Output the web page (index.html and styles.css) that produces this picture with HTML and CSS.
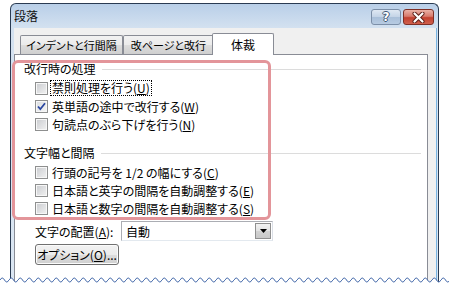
FILE: index.html
```html
<!DOCTYPE html>
<html lang="ja">
<head>
  <meta charset="utf-8">
  <title>段落</title>
  <link rel="stylesheet" href="styles.css">
</head>
<body>
  <div class="page">
    <div class="window">
      <div class="titlebar">
        <span class="title">段落</span>
        <div class="caption-buttons">
          <span class="cap-btn help">?</span>
          <span class="cap-btn close">
            <svg width="13" height="11" viewBox="0 0 13 11">
              <path d="M2.5 1.5 L10.5 9.5 M10.5 1.5 L2.5 9.5" stroke="#5a1d16" stroke-width="4" stroke-linecap="round"/>
              <path d="M2.5 1.5 L10.5 9.5 M10.5 1.5 L2.5 9.5" stroke="#fff" stroke-width="2.2" stroke-linecap="round"/>
            </svg>
          </span>
        </div>
      </div>

      <div class="client">
        <div class="tabs">
          <div class="tab tab-indent">インデントと行間隔</div>
          <div class="tab tab-break">改ページと改行</div>
          <div class="tab tab-layout active">体裁</div>
        </div>

        <div class="panel">
          <div class="group-title">改行時の処理</div>
          <div class="check"><span class="box"></span><span class="focus">禁則処理を行う(<u>U</u>)</span></div>
          <div class="check"><span class="box checked">
            <svg width="11" height="11" viewBox="0 0 11 11"><path d="M2 5.5 L4.3 8.2 L9 2.2" stroke="#2a46a0" stroke-width="1.8" fill="none"/></svg>
          </span><span>英単語の途中で改行する(<u>W</u>)</span></div>
          <div class="check"><span class="box"></span><span>句読点のぶら下げを行う(<u>N</u>)</span></div>

          <div class="group-title second">文字幅と間隔</div>
          <div class="check"><span class="box"></span><span>行頭の記号を 1/2 の幅にする(<u>C</u>)</span></div>
          <div class="check"><span class="box"></span><span>日本語と英字の間隔を自動調整する(<u>E</u>)</span></div>
          <div class="check"><span class="box"></span><span>日本語と数字の間隔を自動調整する(<u>S</u>)</span></div>

          <div class="field-row">
            <span class="field-label">文字の配置(<u>A</u>):</span>
            <div class="combo">
              <span>自動</span>
              <span class="combo-btn">
                <svg width="7" height="4" viewBox="0 0 7 4"><path d="M0 0 H7 L3.5 4 Z" fill="#000"/></svg>
              </span>
            </div>
          </div>

          <button class="btn">オプション(<u>O</u>)...</button>
        </div>
      </div>
    </div>

    <!-- red annotation frame drawn over the dialog -->
    <div class="annotation"></div>

    <!-- torn bottom edge -->
    <svg class="tear" width="449" height="18">
      <defs>
        <pattern id="wave" width="9" height="18" patternUnits="userSpaceOnUse">
          <path d="M0 8 Q2.25 4 4.5 8 T9 8 V18 H0 Z" fill="#fff"/>
          <path d="M0 8 Q2.25 4 4.5 8 T9 8" stroke="#3d63a6" stroke-width="1" fill="none"/>
        </pattern>
      </defs>
      <rect x="0" y="0" width="449" height="18" fill="url(#wave)"/>
    </svg>
  </div>
</body>
</html>
```

FILE: styles.css
```css
html, body {
  margin: 0;
  background: #fff;
}

body {
  font-family: "Noto Sans CJK JP", "Liberation Sans", sans-serif;
  font-size: 12px;
  color: #000;
  font-feature-settings: "palt";
}

.page {
  position: relative;
  width: 449px;
  height: 290px;
  overflow: hidden;
}

.window {
  margin: 3px 0 0 10px;
  width: 427px;
  height: 300px;
  border: 1px solid #2a3b52;
  border-bottom: none;
  border-radius: 6px 6px 0 0;
  background: linear-gradient(#b9cfe8 0, #d3e1f0 24px, #dbe6f2 100%);
}

.titlebar {
  display: flex;
  align-items: flex-start;
  height: 24px;
  padding-left: 3px;
}

.title {
  line-height: 24px;
  color: #111;
}

.caption-buttons {
  display: flex;
  gap: 2px;
  margin: 5px 4px 0 auto;
}

.cap-btn {
  box-sizing: border-box;
  display: flex;
  align-items: center;
  justify-content: center;
  height: 16px;
  border-radius: 3px;
}

.help {
  width: 30px;
  border: 1px solid #7c8fa8;
  background: linear-gradient(#dfe8f3 0%, #c3d3e6 50%, #a9bfd9 51%, #b7cbe2 100%);
  color: #fff;
  font-family: "DejaVu Sans", sans-serif;
  font-weight: bold;
  font-size: 12px;
  text-shadow: 1px 0 #3f5674, -1px 0 #3f5674, 0 1px #3f5674, 0 -1px #3f5674;
}

.close {
  width: 31px;
  border: 1px solid #7e2f25;
  background: linear-gradient(#eab1a6 0%, #d77a6c 45%, #c2402f 55%, #d0604d 100%);
}

.client {
  margin: 0 1px 0 3px;
  border-right: 1px solid #78b4e2;
  background: #f0f0f0;
  padding-top: 5px;
  height: 300px;
}

.tabs {
  display: flex;
  align-items: flex-end;
  padding-left: 6px;
}

.tab {
  box-sizing: border-box;
  height: 19px;
  line-height: 18px;
  text-align: center;
  font-size: 11px;
  border: 1px solid #898c95;
  border-bottom: none;
  border-radius: 2px 2px 0 0;
  background: linear-gradient(#f2f2f2 0%, #ebebeb 50%, #dddddd 51%, #cfcfcf 100%);
  white-space: nowrap;
}

.tab-indent { width: 103px; }
.tab-break { width: 91px; }

.tab.active {
  position: relative;
  z-index: 1;
  width: 62px;
  height: 22px;
  line-height: 22px;
  font-size: 12px;
  margin-left: -2px;
  margin-bottom: -1px;
  background: #fff;
}

.panel {
  margin-right: 8px;
  height: 300px;
  border: 1px solid #898c95;
  background: #fff;
  padding: 5px 0 0 9px;
}

.group-title {
  display: flex;
  align-items: center;
  height: 17px;
  line-height: 17px;
  margin-bottom: 2px;
}

.group-title::after {
  content: "";
  flex: 1;
  border-top: 1px solid #dcdcdc;
  margin: 1px 6px 0 6px;
}

.group-title.second {
  margin-top: 11px;
}

.check {
  display: flex;
  align-items: center;
  height: 18px;
  padding-left: 11px;
  white-space: nowrap;
}

.box {
  box-sizing: border-box;
  display: flex;
  align-items: center;
  justify-content: center;
  width: 13px;
  height: 13px;
  margin-right: 4px;
  border: 1px solid #8e8f8f;
  background: linear-gradient(135deg, #c9cbcf, #f2f2f2);
  box-shadow: inset 0 0 0 1px #f7f7f7;
}

.box.checked {
  background: linear-gradient(135deg, #d9dce0, #f6f6f6);
}

.focus {
  outline: 1px dotted #000;
  padding: 0 1px;
  margin-left: -1px;
  line-height: 14px;
}

u {
  text-underline-offset: 1px;
}

.field-row {
  display: flex;
  align-items: center;
  height: 20px;
  margin-top: 4px;
  padding-left: 11px;
}

.field-label {
  width: 86px;
  white-space: nowrap;
}

.combo {
  box-sizing: border-box;
  display: flex;
  align-items: center;
  justify-content: space-between;
  width: 152px;
  height: 20px;
  padding: 1px 1px 1px 4px;
  border: 1px solid #abadb3;
  border-right-color: #dbdfe6;
  border-bottom-color: #e3e9ef;
  background: #fff;
}

.combo-btn {
  box-sizing: border-box;
  display: flex;
  align-items: center;
  justify-content: center;
  width: 16px;
  height: 16px;
  border: 1px solid #8f8f8f;
  background: linear-gradient(#f2f2f2 0%, #e2e2e2 50%, #d2d2d2 51%, #c8c8c8 100%);
}

.btn {
  display: block;
  margin: 3px 0 0 11px;
  width: 84px;
  height: 21px;
  padding: 0;
  border: 1px solid #707070;
  border-radius: 3px;
  background: linear-gradient(#f2f2f2 0%, #ebebeb 50%, #dddddd 51%, #cfcfcf 100%);
  box-shadow: inset 0 0 0 1px #fbfbfb;
  font: inherit;
  color: #000;
}

.annotation {
  position: absolute;
  left: 12px;
  top: 60px;
  box-sizing: border-box;
  width: 259px;
  height: 160px;
  border: 3px solid #e3959a;
  border-radius: 6px;
}

.tear {
  position: absolute;
  left: 0;
  top: 272px;
}
```
